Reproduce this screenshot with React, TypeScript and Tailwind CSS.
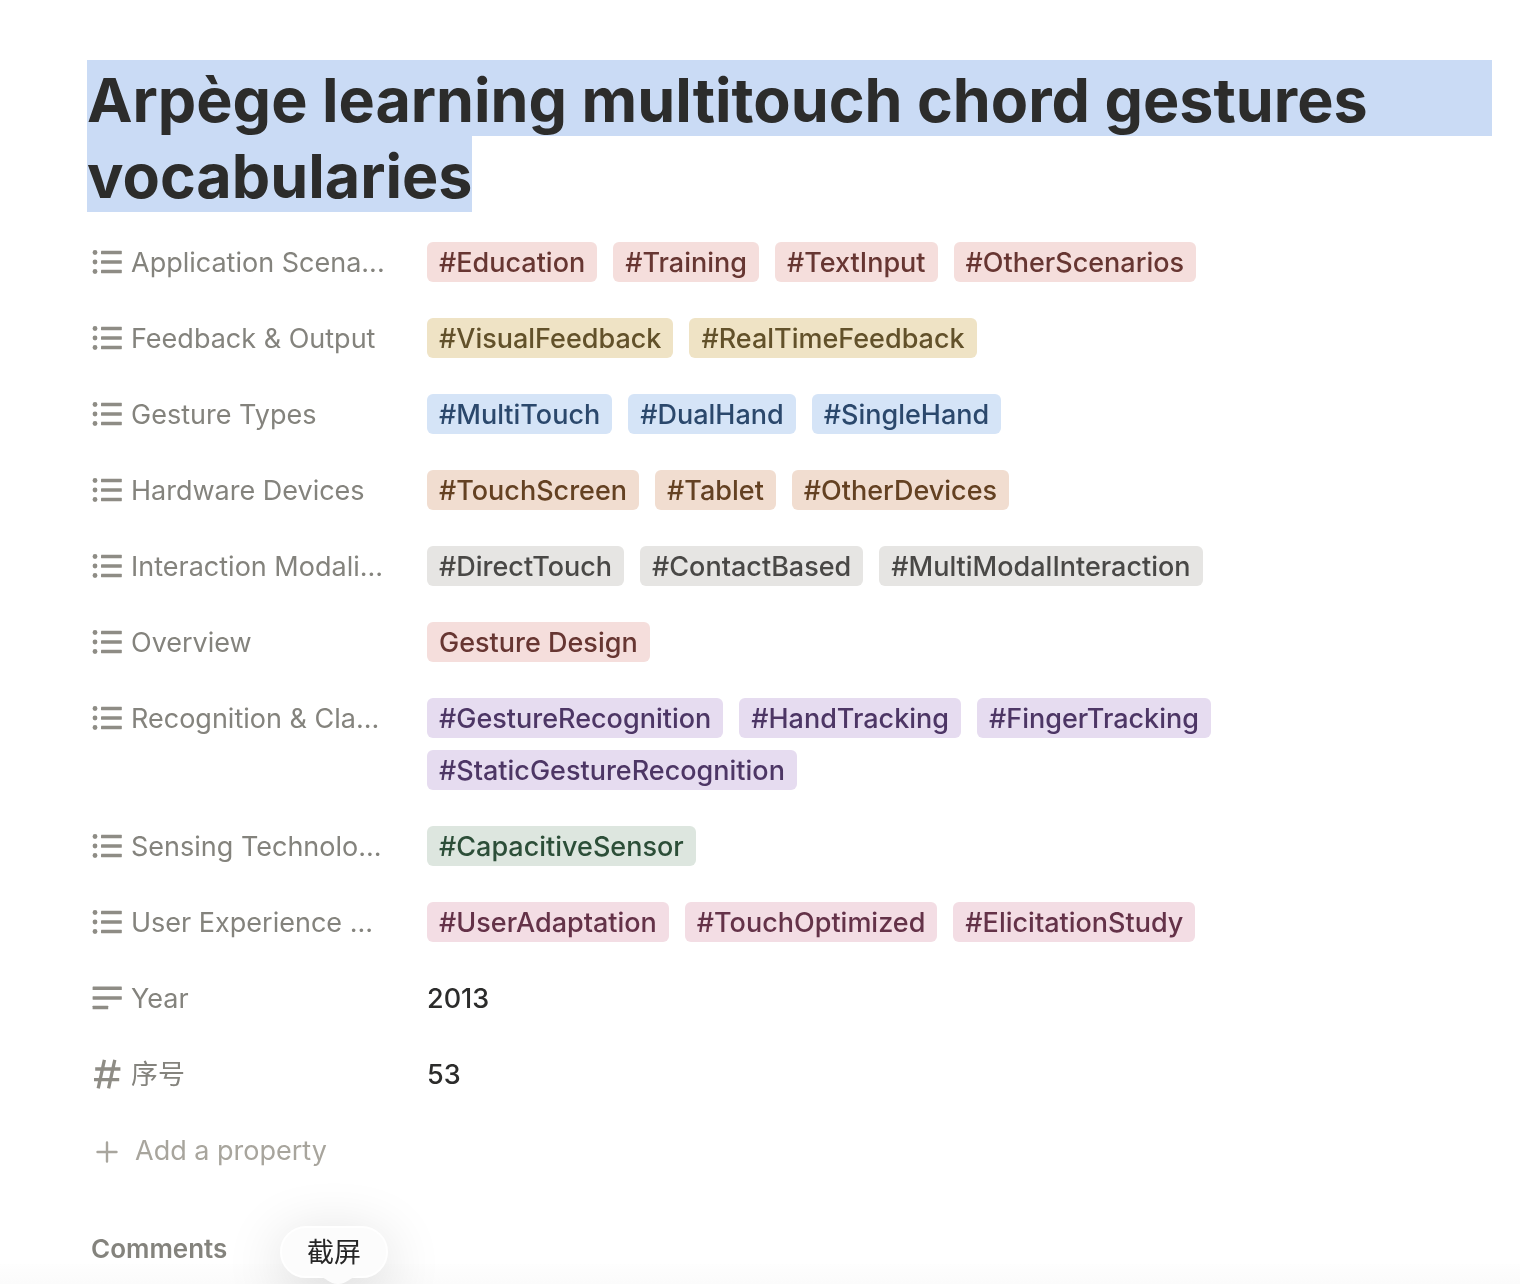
import type { ReactNode } from "react";

type Tone = "red" | "yellow" | "blue" | "orange" | "gray" | "purple" | "green" | "pink";

const tones: Record<Tone, string> = {
  red: "bg-[#f5dedc] text-[#673632]",
  yellow: "bg-[#efe3c5] text-[#62512a]",
  blue: "bg-[#d5e4f7] text-[#2b486c]",
  orange: "bg-[#f1ddd0] text-[#644122]",
  gray: "bg-[#e6e5e3] text-[#494846]",
  purple: "bg-[#e6dcf0] text-[#4d3665]",
  green: "bg-[#dde6df] text-[#2c4e38]",
  pink: "bg-[#f3dde4] text-[#643248]",
};

type Property = {
  label: string;
  icon: "list" | "text" | "number";
  tone?: Tone;
  tags?: string[];
  value?: string;
};

const properties: Property[] = [
  { label: "Application Scena...", icon: "list", tone: "red", tags: ["#Education", "#Training", "#TextInput", "#OtherScenarios"] },
  { label: "Feedback & Output", icon: "list", tone: "yellow", tags: ["#VisualFeedback", "#RealTimeFeedback"] },
  { label: "Gesture Types", icon: "list", tone: "blue", tags: ["#MultiTouch", "#DualHand", "#SingleHand"] },
  { label: "Hardware Devices", icon: "list", tone: "orange", tags: ["#TouchScreen", "#Tablet", "#OtherDevices"] },
  { label: "Interaction Modali...", icon: "list", tone: "gray", tags: ["#DirectTouch", "#ContactBased", "#MultiModalInteraction"] },
  { label: "Overview", icon: "list", tone: "red", tags: ["Gesture Design"] },
  { label: "Recognition & Cla...", icon: "list", tone: "purple", tags: ["#GestureRecognition", "#HandTracking", "#FingerTracking", "#StaticGestureRecognition"] },
  { label: "Sensing Technolo...", icon: "list", tone: "green", tags: ["#CapacitiveSensor"] },
  { label: "User Experience ...", icon: "list", tone: "pink", tags: ["#UserAdaptation", "#TouchOptimized", "#ElicitationStudy"] },
  { label: "Year", icon: "text", value: "2013" },
  { label: "序号", icon: "number", value: "53" },
];

const icons: Record<Property["icon"], ReactNode> = {
  list: (
    <g fill="currentColor">
      <circle cx="4" cy="4.5" r="2.4" />
      <circle cx="4" cy="14" r="2.4" />
      <circle cx="4" cy="23.5" r="2.4" />
      <rect x="10" y="2.8" width="20.8" height="3.4" rx=".4" />
      <rect x="10" y="12.3" width="20.8" height="3.4" rx=".4" />
      <rect x="10" y="21.8" width="20.8" height="3.4" rx=".4" />
    </g>
  ),
  text: (
    <g fill="currentColor">
      <rect x="1.6" y="2.6" width="29.2" height="3.5" rx=".4" />
      <rect x="1.6" y="12.2" width="29.2" height="3.5" rx=".4" />
      <rect x="1.6" y="21.8" width="15.6" height="3.5" rx=".4" />
    </g>
  ),
  number: (
    <path d="M4.2 9h25.2M3 19.6h25.2M13.4-.2L7.2 28.4M23.8-.2l-6.2 28.6" fill="none" stroke="currentColor" strokeWidth="3.3" />
  ),
};

function PropertyRow({ label, icon, tone, tags, value }: Property) {
  return (
    <div className="flex items-start">
      <dt className="w-[336px] shrink-0">
        <button type="button" className="flex h-[68px] items-center gap-2 text-[#84837d]">
          <svg viewBox="0 0 32 28" className="h-7 w-8 overflow-visible text-[#8e8c85]" aria-hidden="true">
            {icons[icon]}
          </svg>
          <span className="pt-0.5 whitespace-nowrap">{label}</span>
        </button>
      </dt>
      <dd className="max-w-[840px] min-w-0 flex-1 font-medium">
        {tags && tone ? (
          <ul className="flex flex-wrap gap-x-4 gap-y-3 py-3.5">
            {tags.map((tag) => (
              <li key={tag} className={`h-10 rounded-md px-3 leading-[42px] whitespace-nowrap ${tones[tone]}`}>
                {tag}
              </li>
            ))}
          </ul>
        ) : (
          <span className="flex h-[68px] items-center pt-0.5 text-[#2c2c2b]">{value}</span>
        )}
      </dd>
    </div>
  );
}

export default function App() {
  return (
    <div className="relative min-h-screen overflow-hidden bg-white font-['Inter','Noto_Sans_CJK_SC',sans-serif] text-[27px]">
      <main className="pt-[60px] pr-7 pl-[87px]">
        <h1 className="text-[61px] leading-[80px] font-bold text-[#2c2c2b]">
          <span className="block h-[76px] bg-[#cadbf5]">Arpège learning multitouch chord gestures </span>
          <span className="block h-[76px] w-fit bg-[#cadbf5]">vocabularies</span>
        </h1>
        <dl className="mt-4 flex flex-col gap-2 pl-1">
          {properties.map((property) => (
            <PropertyRow key={property.label} {...property} />
          ))}
        </dl>
        <button type="button" className="mt-2 flex h-[68px] items-center gap-4 pt-0.5 pl-2 text-[#a8a59d]">
          <svg viewBox="0 0 24 24" className="size-6" fill="none" stroke="currentColor" strokeWidth="2.4" strokeLinecap="round" aria-hidden="true">
            <path d="M2.5 13h19M12 3.5v19" />
          </svg>
          Add a property
        </button>
        <h2 className="mt-8 pl-1 text-[26px] leading-[66px] font-semibold text-[#84837d]">Comments</h2>
      </main>
      <div className="absolute inset-x-0 bottom-0 h-5 bg-linear-to-b from-[#fefefe] to-[#fbfbfb] mix-blend-multiply" />
      <div
        role="tooltip"
        className="absolute bottom-1.5 left-[280px] flex h-[52px] w-[108px] items-center justify-center rounded-[26px] border-2 border-white bg-[#fcfcfc] pt-0.5 text-[27px] text-[#262626] shadow-[0_12px_60px_rgba(0,0,0,0.16)]"
      >
        截屏
        <svg viewBox="0 0 40 8" className="absolute top-12 left-9 h-2 w-10" aria-hidden="true">
          <path d="M0 0C8 1 11 8 20 8S32 1 40 0z" fill="#fcfcfc" />
        </svg>
      </div>
    </div>
  );
}
